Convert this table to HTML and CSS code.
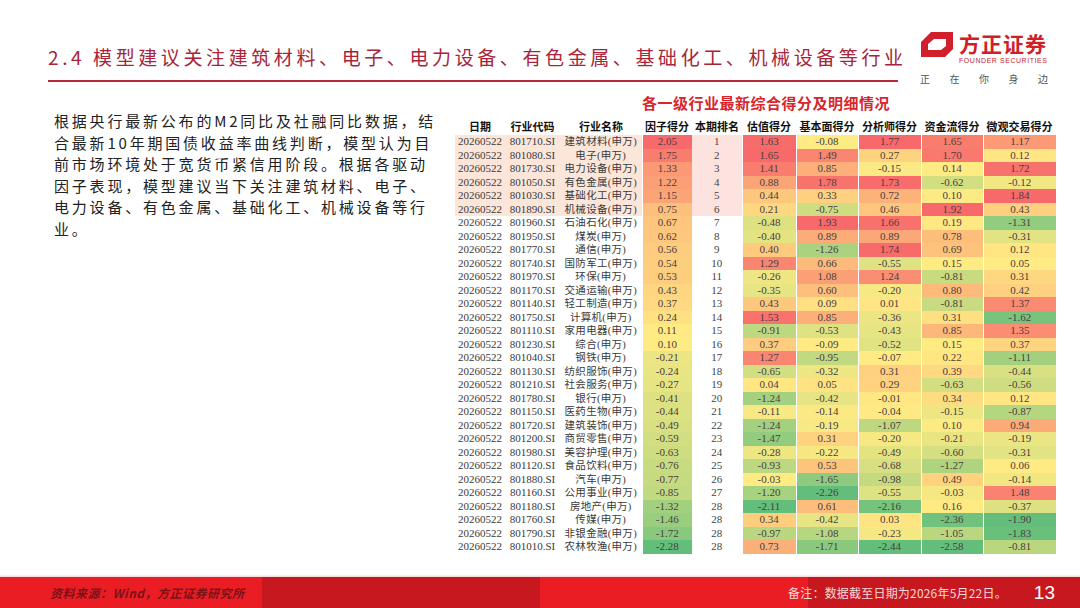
FILE: index.html
```html
<!DOCTYPE html>
<html lang="zh-CN">
<head>
<meta charset="utf-8">
<title>2.4 模型建议关注建筑材料、电子、电力设备、有色金属、基础化工、机械设备等行业</title>
<link rel="stylesheet" href="styles.css">
<script src="script.js" defer></script>
</head>
<body>
<div class="page">
  <header class="top">
    <div class="title-wrap">
      <h1 class="title">2.4 模型建议关注建筑材料、电子、电力设备、有色金属、基础化工、机械设备等行业</h1>
    </div>
    <div class="logo">
      <div class="logo-main">
        <svg class="logo-mark" width="32" height="25" viewBox="0 0 32 25" aria-hidden="true">
          <path fill-rule="evenodd" d="M10 0H32V17L24 25H0V10Z M13 7H25V14L20 18H7V12Z" fill="#d1202b"/>
        </svg>
        <div class="logo-text">
          <div class="logo-cn">方正证券</div>
          <div class="logo-en">FOUNDER SECURITIES</div>
        </div>
      </div>
      <div class="logo-slogan"><span>正</span><span>在</span><span>你</span><span>身</span><span>边</span></div>
    </div>
  </header>

  <main class="content">
    <p class="desc">根据央行最新公布的M2同比及社融同比数据，结<br>合最新10年期国债收益率曲线判断，模型认为目<br>前市场环境处于宽货币紧信用阶段。根据各驱动<br>因子表现，模型建议当下关注建筑材料、电子、<br>电力设备、有色金属、基础化工、机械设备等行<br>业。</p>

    <section class="board">
      <h2 class="board-title">各一级行业最新综合得分及明细情况</h2>
      <table class="grid">
        <colgroup>
          <col class="w-date"><col class="w-code"><col class="w-name"><col class="w-factor"><col class="w-rank">
          <col class="w-val"><col class="w-fund"><col class="w-ana"><col class="w-flow"><col class="w-micro">
        </colgroup>
        <thead>
          <tr><th>日期</th><th>行业代码</th><th>行业名称</th><th>因子得分</th><th>本期排名</th><th>估值得分</th><th>基本面得分</th><th>分析师得分</th><th>资金流得分</th><th>微观交易得分</th></tr>
        </thead>
        <tbody>
          <tr class="hl"><td>20260522</td><td>801710.SI</td><td class="nm">建筑材料(申万)</td><td class="h">2.05</td><td class="rk">1</td><td class="h">1.63</td><td class="h">-0.08</td><td class="h">1.77</td><td class="h">1.65</td><td class="h">1.17</td></tr>
          <tr class="hl"><td>20260522</td><td>801080.SI</td><td class="nm">电子(申万)</td><td class="h">1.75</td><td class="rk">2</td><td class="h">1.65</td><td class="h">1.49</td><td class="h">0.27</td><td class="h">1.70</td><td class="h">0.12</td></tr>
          <tr class="hl"><td>20260522</td><td>801730.SI</td><td class="nm">电力设备(申万)</td><td class="h">1.33</td><td class="rk">3</td><td class="h">1.41</td><td class="h">0.85</td><td class="h">-0.15</td><td class="h">0.14</td><td class="h">1.72</td></tr>
          <tr class="hl"><td>20260522</td><td>801050.SI</td><td class="nm">有色金属(申万)</td><td class="h">1.22</td><td class="rk">4</td><td class="h">0.88</td><td class="h">1.78</td><td class="h">1.73</td><td class="h">-0.62</td><td class="h">-0.12</td></tr>
          <tr class="hl"><td>20260522</td><td>801030.SI</td><td class="nm">基础化工(申万)</td><td class="h">1.15</td><td class="rk">5</td><td class="h">0.44</td><td class="h">0.33</td><td class="h">0.72</td><td class="h">0.10</td><td class="h">1.84</td></tr>
          <tr class="hl"><td>20260522</td><td>801890.SI</td><td class="nm">机械设备(申万)</td><td class="h">0.75</td><td class="rk">6</td><td class="h">0.21</td><td class="h">-0.75</td><td class="h">0.46</td><td class="h">1.92</td><td class="h">0.43</td></tr>
          <tr><td>20260522</td><td>801960.SI</td><td class="nm">石油石化(申万)</td><td class="h">0.67</td><td class="rk">7</td><td class="h">-0.48</td><td class="h">1.93</td><td class="h">1.66</td><td class="h">0.19</td><td class="h">-1.31</td></tr>
          <tr><td>20260522</td><td>801950.SI</td><td class="nm">煤炭(申万)</td><td class="h">0.62</td><td class="rk">8</td><td class="h">-0.40</td><td class="h">0.89</td><td class="h">0.89</td><td class="h">0.78</td><td class="h">-0.31</td></tr>
          <tr><td>20260522</td><td>801770.SI</td><td class="nm">通信(申万)</td><td class="h">0.56</td><td class="rk">9</td><td class="h">0.40</td><td class="h">-1.26</td><td class="h">1.74</td><td class="h">0.69</td><td class="h">0.12</td></tr>
          <tr><td>20260522</td><td>801740.SI</td><td class="nm">国防军工(申万)</td><td class="h">0.54</td><td class="rk">10</td><td class="h">1.29</td><td class="h">0.66</td><td class="h">-0.55</td><td class="h">0.15</td><td class="h">0.05</td></tr>
          <tr><td>20260522</td><td>801970.SI</td><td class="nm">环保(申万)</td><td class="h">0.53</td><td class="rk">11</td><td class="h">-0.26</td><td class="h">1.08</td><td class="h">1.24</td><td class="h">-0.81</td><td class="h">0.31</td></tr>
          <tr><td>20260522</td><td>801170.SI</td><td class="nm">交通运输(申万)</td><td class="h">0.43</td><td class="rk">12</td><td class="h">-0.35</td><td class="h">0.60</td><td class="h">-0.20</td><td class="h">0.80</td><td class="h">0.42</td></tr>
          <tr><td>20260522</td><td>801140.SI</td><td class="nm">轻工制造(申万)</td><td class="h">0.37</td><td class="rk">13</td><td class="h">0.43</td><td class="h">0.09</td><td class="h">0.01</td><td class="h">-0.81</td><td class="h">1.37</td></tr>
          <tr><td>20260522</td><td>801750.SI</td><td class="nm">计算机(申万)</td><td class="h">0.24</td><td class="rk">14</td><td class="h">1.53</td><td class="h">0.85</td><td class="h">-0.36</td><td class="h">0.31</td><td class="h">-1.62</td></tr>
          <tr><td>20260522</td><td>801110.SI</td><td class="nm">家用电器(申万)</td><td class="h">0.11</td><td class="rk">15</td><td class="h">-0.91</td><td class="h">-0.53</td><td class="h">-0.43</td><td class="h">0.85</td><td class="h">1.35</td></tr>
          <tr><td>20260522</td><td>801230.SI</td><td class="nm">综合(申万)</td><td class="h">0.10</td><td class="rk">16</td><td class="h">0.37</td><td class="h">-0.09</td><td class="h">-0.52</td><td class="h">0.15</td><td class="h">0.37</td></tr>
          <tr><td>20260522</td><td>801040.SI</td><td class="nm">钢铁(申万)</td><td class="h">-0.21</td><td class="rk">17</td><td class="h">1.27</td><td class="h">-0.95</td><td class="h">-0.07</td><td class="h">0.22</td><td class="h">-1.11</td></tr>
          <tr><td>20260522</td><td>801130.SI</td><td class="nm">纺织服饰(申万)</td><td class="h">-0.24</td><td class="rk">18</td><td class="h">-0.65</td><td class="h">-0.32</td><td class="h">0.31</td><td class="h">0.39</td><td class="h">-0.44</td></tr>
          <tr><td>20260522</td><td>801210.SI</td><td class="nm">社会服务(申万)</td><td class="h">-0.27</td><td class="rk">19</td><td class="h">0.04</td><td class="h">0.05</td><td class="h">0.29</td><td class="h">-0.63</td><td class="h">-0.56</td></tr>
          <tr><td>20260522</td><td>801780.SI</td><td class="nm">银行(申万)</td><td class="h">-0.41</td><td class="rk">20</td><td class="h">-1.24</td><td class="h">-0.42</td><td class="h">-0.01</td><td class="h">0.34</td><td class="h">0.12</td></tr>
          <tr><td>20260522</td><td>801150.SI</td><td class="nm">医药生物(申万)</td><td class="h">-0.44</td><td class="rk">21</td><td class="h">-0.11</td><td class="h">-0.14</td><td class="h">-0.04</td><td class="h">-0.15</td><td class="h">-0.87</td></tr>
          <tr><td>20260522</td><td>801720.SI</td><td class="nm">建筑装饰(申万)</td><td class="h">-0.49</td><td class="rk">22</td><td class="h">-1.24</td><td class="h">-0.19</td><td class="h">-1.07</td><td class="h">0.10</td><td class="h">0.94</td></tr>
          <tr><td>20260522</td><td>801200.SI</td><td class="nm">商贸零售(申万)</td><td class="h">-0.59</td><td class="rk">23</td><td class="h">-1.47</td><td class="h">0.31</td><td class="h">-0.20</td><td class="h">-0.21</td><td class="h">-0.19</td></tr>
          <tr><td>20260522</td><td>801980.SI</td><td class="nm">美容护理(申万)</td><td class="h">-0.63</td><td class="rk">24</td><td class="h">-0.28</td><td class="h">-0.22</td><td class="h">-0.49</td><td class="h">-0.60</td><td class="h">-0.31</td></tr>
          <tr><td>20260522</td><td>801120.SI</td><td class="nm">食品饮料(申万)</td><td class="h">-0.76</td><td class="rk">25</td><td class="h">-0.93</td><td class="h">0.53</td><td class="h">-0.68</td><td class="h">-1.27</td><td class="h">0.06</td></tr>
          <tr><td>20260522</td><td>801880.SI</td><td class="nm">汽车(申万)</td><td class="h">-0.77</td><td class="rk">26</td><td class="h">-0.03</td><td class="h">-1.65</td><td class="h">-0.98</td><td class="h">0.49</td><td class="h">-0.14</td></tr>
          <tr><td>20260522</td><td>801160.SI</td><td class="nm">公用事业(申万)</td><td class="h">-0.85</td><td class="rk">27</td><td class="h">-1.20</td><td class="h">-2.26</td><td class="h">-0.55</td><td class="h">-0.03</td><td class="h">1.48</td></tr>
          <tr><td>20260522</td><td>801180.SI</td><td class="nm">房地产(申万)</td><td class="h">-1.32</td><td class="rk">28</td><td class="h">-2.11</td><td class="h">0.61</td><td class="h">-2.16</td><td class="h">0.16</td><td class="h">-0.37</td></tr>
          <tr><td>20260522</td><td>801760.SI</td><td class="nm">传媒(申万)</td><td class="h">-1.46</td><td class="rk">28</td><td class="h">0.34</td><td class="h">-0.42</td><td class="h">0.03</td><td class="h">-2.36</td><td class="h">-1.90</td></tr>
          <tr><td>20260522</td><td>801790.SI</td><td class="nm">非银金融(申万)</td><td class="h">-1.72</td><td class="rk">28</td><td class="h">-0.97</td><td class="h">-1.08</td><td class="h">-0.23</td><td class="h">-1.05</td><td class="h">-1.83</td></tr>
          <tr><td>20260522</td><td>801010.SI</td><td class="nm">农林牧渔(申万)</td><td class="h">-2.28</td><td class="rk">28</td><td class="h">0.73</td><td class="h">-1.71</td><td class="h">-2.44</td><td class="h">-2.58</td><td class="h">-0.81</td></tr>
        </tbody>
      </table>
    </section>
  </main>

  <footer class="foot">
    <span class="src">资料来源：Wind，方正证券研究所</span>
    <span class="note">备注：数据截至日期为2026年5月22日。</span>
    <span class="pg">13</span>
  </footer>
</div>
</body>
</html>
```

FILE: styles.css
```css
* { box-sizing: border-box; }
html, body { margin: 0; padding: 0; background: #fff; }
body { font-family: "Noto Sans CJK SC", "Noto Sans", sans-serif; color: #222; }

.page {
  width: 1080px;
  height: 608px;
  display: flex;
  flex-direction: column;
  overflow: hidden;
}

/* ---------- header ---------- */
.top {
  display: flex;
  align-items: flex-start;
  height: 84px;
  flex: none;
}
.title-wrap {
  margin-left: 48px;
  width: 850px;
  margin-top: 45px;
  padding-bottom: 11px;
  border-bottom: 2px solid #b8283c;
}
.title {
  margin: 0;
  font-size: 19px;
  line-height: 24px;
  font-weight: 400;
  letter-spacing: 3.6px;
  color: #a8243a;
  white-space: nowrap;
}
.logo {
  margin-left: auto;
  margin-right: 32px;
  margin-top: 32px;
  width: 128px;
}
.logo-main {
  display: flex;
  align-items: flex-start;
}
.logo-mark { display: block; flex: none; margin-left: 1px; }
.logo-text { margin-left: 6px; }
.logo-cn {
  font-size: 21px;
  line-height: 22px;
  font-weight: 700;
  color: #cf2028;
  letter-spacing: 1px;
}
.logo-en {
  font-family: "Liberation Sans", Arial, sans-serif;
  font-size: 7px;
  line-height: 8px;
  margin-top: 3px;
  color: #c2282f;
  letter-spacing: 0.55px;
  white-space: nowrap;
}
.logo-slogan {
  display: flex;
  justify-content: space-between;
  margin-top: 8px;
  font-size: 10px;
  line-height: 11px;
  color: #555;
}

/* ---------- main ---------- */
.content {
  flex: 1;
  display: flex;
  align-items: flex-start;
  padding-left: 54px;
}
.desc {
  margin: 0;
  width: 390px;
  padding-top: 26px;
  font-size: 15px;
  line-height: 21.6px;
  letter-spacing: 2.8px;
  color: #222;
  white-space: nowrap;
}
.board {
  margin-left: 11px;
  width: 601px;
  padding-top: 10px;
}
.board-title {
  margin: 0;
  padding-left: 21px;
  text-align: center;
  font-size: 15px;
  line-height: 18px;
  font-weight: 700;
  letter-spacing: 0.5px;
  color: #d8262d;
}
.grid {
  margin-top: 5px;
  border-collapse: collapse;
  table-layout: fixed;
  width: 601px;
  font-family: "Liberation Serif", "Noto Sans CJK SC", serif;
  font-size: 11px;
  color: #3a3a3a;
}
.w-date { width: 50px; }
.w-code { width: 55px; }
.w-name { width: 82px; }
.w-factor { width: 50px; }
.w-rank { width: 50px; }
.w-val { width: 54px; }
.w-fund { width: 62px; }
.w-ana { width: 63px; }
.w-flow { width: 62px; }
.w-micro { width: 73px; }

.grid th {
  height: 18px;
  padding: 0;
  font-family: "Noto Sans CJK SC", sans-serif;
  font-size: 11px;
  line-height: 18px;
  font-weight: 700;
  color: #111;
  white-space: nowrap;
}
.grid td {
  height: 13.5px;
  padding: 0;
  line-height: 13.5px;
  text-align: center;
  white-space: nowrap;
}
.grid td.nm {
  font-family: "Liberation Serif", "Noto Sans CJK SC", serif;
  font-size: 10.5px;
  line-height: 13.5px;
  letter-spacing: 0.3px;
}
.grid td.h { border-left: 1px solid #fff; color: #4a4040; }
.grid td.rk { color: #444; }
.grid tr.hl td { background: #fce6da; }
.grid tr.hl td.rk { background: #fde3df; }

/* ---------- footer ---------- */
.foot {
  flex: none;
  height: 31px;
  display: flex;
  align-items: center;
  background: linear-gradient(90deg, #ea1d25 0, #ea1d25 262px, #c8181f 262px, #c8181f 540px, #ea1d25 540px, #ea1d25 808px, #c8181f 808px, #c8181f 100%);
  box-shadow: 0 -1px 2px rgba(200, 60, 60, 0.25);
}
.src {
  padding-left: 50px;
  font-size: 12px;
  font-style: italic;
  font-weight: 700;
  letter-spacing: 0.5px;
  color: #7d1216;
}
.note {
  margin-left: auto;
  font-size: 12px;
  letter-spacing: 0.2px;
  color: #f8dada;
}
.pg {
  margin-left: 27px;
  margin-right: 25px;
  font-family: "Liberation Sans", Arial, sans-serif;
  font-size: 19px;
  color: #fff;
}
```

FILE: script.js
```js
(function () {
  var green = [99, 190, 123], yellow = [255, 235, 132], red = [248, 105, 107];
  function mix(a, b, t) {
    return 'rgb(' + [0, 1, 2].map(function (i) { return Math.round(a[i] + (b[i] - a[i]) * t); }).join(',') + ')';
  }
  var rows = Array.prototype.slice.call(document.querySelectorAll('.grid tbody tr'));
  [3, 5, 6, 7, 8, 9].forEach(function (c) {
    var cells = rows.map(function (r) { return r.cells[c]; });
    var vals = cells.map(function (td) { return parseFloat(td.textContent); });
    var s = vals.slice().sort(function (a, b) { return a - b; });
    var min = s[0], max = s[s.length - 1], mid = s[Math.floor((s.length - 1) / 2)];
    cells.forEach(function (td, i) {
      var v = vals[i], col;
      if (v <= mid) col = mix(green, yellow, mid === min ? 1 : (v - min) / (mid - min));
      else col = mix(yellow, red, (v - mid) / (max - mid));
      td.style.backgroundColor = col;
    });
  });
})();
```
